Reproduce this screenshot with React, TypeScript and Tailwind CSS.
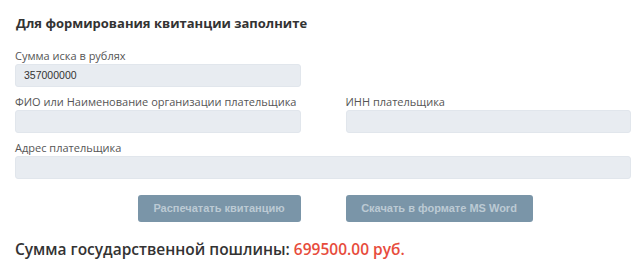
import React from "react";

const Field = ({ label, value }: { label: string; value?: string }) => (
  <div className="flex flex-col">
    <label className="h-[16px] text-[11px] leading-[16px] text-[#555] whitespace-nowrap">{label}</label>
    <div className="h-[23px] rounded-[3px] border border-[#e1e6ec] bg-[#e8ecf1] px-[8px] flex items-center text-[10.5px] text-[#333] font-['Liberation_Sans',Arial,sans-serif]">
      {value}
    </div>
  </div>
);

export default function App() {
  return (
    <div className="w-[640px] h-[274px] bg-white pl-[15px] pr-[9px] pt-[13px] font-['Open_Sans',sans-serif] text-[#333] overflow-hidden">
      <h2 className="text-[13px] leading-[20px] font-bold text-[#333] ml-[1px]">
        Для формирования квитанции заполните
      </h2>
      <div className="grid grid-cols-2 gap-x-[45px] mt-[15px]">
        <Field label="Сумма иска в рублях" value="357000000" />
        <div />
        <div className="mt-[7px]">
          <Field label="ФИО или Наименование организации плательщика" />
        </div>
        <div className="mt-[7px]">
          <Field label="ИНН плательщика" />
        </div>
        <div className="col-span-2 mt-[7px]">
          <Field label="Адрес плательщика" />
        </div>
        <div className="flex justify-end mt-[16px]">
          <button className="h-[27px] w-[163px] rounded-[3px] bg-[#7a95a8] text-[11px] font-bold text-[#bccad4] font-['Liberation_Sans',Arial,sans-serif]">
            Распечатать квитанцию
          </button>
        </div>
        <div className="flex justify-start mt-[16px]">
          <button className="h-[27px] w-[187px] rounded-[3px] bg-[#7a95a8] text-[11px] font-bold text-[#bccad4] font-['Liberation_Sans',Arial,sans-serif]">
            Скачать в формате MS Word
          </button>
        </div>
      </div>
      <div className="mt-[15px] text-[15.5px] leading-[24px] font-semibold text-[#333] whitespace-nowrap">
        Сумма государственной пошлины: <span className="text-[#e74c3c]">699500.00 руб.</span>
      </div>
    </div>
  );
}
